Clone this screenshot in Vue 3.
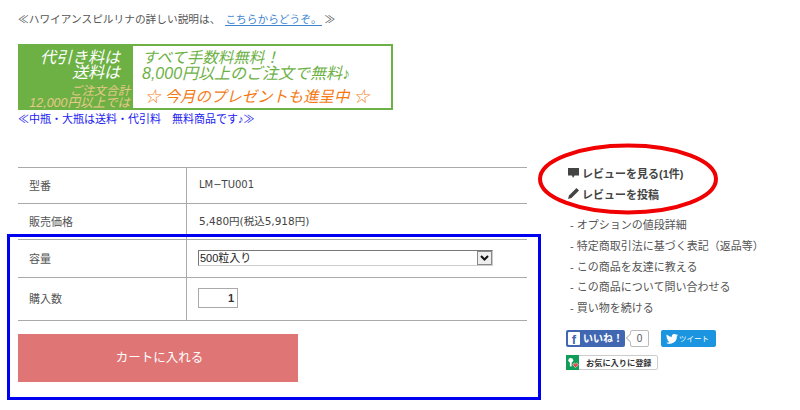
<template>
  <div class="page">
    <main class="left">
      <p class="intro">≪ハワイアンスピルリナの詳しい説明は、 <a class="link">こちらからどうぞ。</a> ≫</p>
      <div class="banner">
        <div class="b-left">
          <div class="b-title">代引き料は<br />送料は</div>
          <div class="b-sub">ご注文合計<br /><span class="b-sub2">12,000円以上では</span></div>
        </div>
        <div class="b-right">
          <div class="b-l1">すべて手数料無料！</div>
          <div class="b-l2">8,000円以上のご注文で無料♪</div>
          <div class="b-l3">☆ 今月のプレゼントも進呈中 ☆</div>
        </div>
      </div>
      <p class="note">≪中瓶・大瓶は送料・代引料　無料商品です♪≫</p>
      <div class="table">
        <div class="row r1"><div class="th">型番</div><div class="td">LM−TU001</div></div>
        <div class="row r2"><div class="th">販売価格</div><div class="td">5,480円(税込5,918円)</div></div>
        <div class="row r3">
          <div class="th">容量</div>
          <div class="td">
            <div class="select">500粒入り<span class="arrow"><svg width="11" height="8" viewBox="0 0 11 8"><path d="M2 2l3.500 3.500L9 2" fill="none" stroke="#111" stroke-width="2" /></svg></span></div>
          </div>
        </div>
        <div class="row r4"><div class="th">購入数</div><div class="td"><div class="qty">1</div></div></div>
      </div>
      <button class="cart">カートに入れる</button>
    </main>
    <aside class="side">
      <div class="review">
        <div class="rv rv1">
          <svg width="13" height="12" viewBox="0 0 13 12"><path d="M1 1h11v7.500H7.500L6 11 5 8.500H1z" fill="#444" /></svg>
          レビューを見る(1件)
        </div>
        <div class="rv rv2">
          <svg width="13" height="13" viewBox="0 0 13 13"><path d="M9.500 1l2.500 2.500-7.500 7.500L1 12l1-3.500z" fill="#444" /></svg>
          レビューを投稿
        </div>
      </div>
      <ul class="links">
        <li v-for="item in links" :key="item">- {{ item }}</li>
      </ul>
      <div class="social">
        <div class="fb"><span class="fb-f">f</span>いいね！</div>
        <div class="count">0</div>
        <div class="tw">
          <svg width="12" height="10" viewBox="0 0 24 20"><path d="M24 2.400a9.800 9.800 0 0 1-2.800.8A4.900 4.900 0 0 0 23.300.5a9.800 9.800 0 0 1-3.100 1.200 4.900 4.900 0 0 0-8.400 4.500A14 14 0 0 1 1.700 1a4.900 4.900 0 0 0 1.500 6.600 4.900 4.900 0 0 1-2.200-.6 4.900 4.900 0 0 0 3.900 4.800 4.900 4.900 0 0 1-2.200.1 4.900 4.900 0 0 0 4.600 3.400A9.900 9.900 0 0 1 0 17.300 14 14 0 0 0 21.600 4.900 10 10 0 0 0 24 2.400z" fill="#fff" /></svg>
          <span>ツイート</span>
        </div>
      </div>
      <div class="fav">
        <span class="fav-icon">
          <svg width="15" height="15" viewBox="0 0 15 15"><circle cx="5.500" cy="5" r="2.800" fill="#fff" /><rect x="4.500" y="6" width="2" height="6" fill="#fff" /><path d="M11 13.500L8 10.500a1.700 1.700 0 0 1 3-1.500 1.700 1.700 0 0 1 3 1.500z" fill="#e8404a" stroke="#fff" stroke-width=".6" /></svg>
        </span>
        <span class="fav-text">お気に入りに登録</span>
      </div>
    </aside>
    <div class="blue-box"></div>
    <svg class="ellipse" width="182" height="74" viewBox="0 0 182 74"><ellipse cx="91" cy="36" rx="88" ry="33.500" fill="none" stroke="#f00000" stroke-width="4" /></svg>
  </div>
</template>

<script setup>
const links = [
  'オプションの値段詳細',
  '特定商取引法に基づく表記（返品等）',
  'この商品を友達に教える',
  'この商品について問い合わせる',
  '買い物を続ける'
]
</script>

<style>
html, body { margin: 0; background: #fff; overflow: hidden; }
</style>

<style scoped>
.page {
  position: relative;
  width: 800px;
  height: 410px;
  overflow: hidden;
  display: flex;
  background: #fff;
  font-family: "Liberation Sans", "Noto Sans CJK JP", sans-serif;
  color: #555;
  font-size: 11px;
}
.left { width: 509px; margin-left: 18px; flex: none; }
.intro { margin: 11px 0 0; height: 16px; line-height: 16px; font-size: 10.700px; white-space: nowrap; }
.link { color: #3d85d0; border-bottom: 1px solid #3d85d0; margin-left: 2px; }
.banner {
  margin-top: 17px;
  width: 375px;
  height: 66px;
  box-sizing: border-box;
  display: flex;
  border: 2px solid #6db145;
  background: #6db145;
  font-style: italic;
}
.b-left { width: 113px; flex: none; text-align: right; color: #fff; }
.b-title { font-size: 16px; line-height: 15px; padding: 4px 13px 0 0; }
.b-sub { color: #e8c98a; font-size: 12px; line-height: 12px; margin-top: 5px; padding-right: 3px; white-space: nowrap; }
.b-sub2 { font-size: 12.500px; }
.b-right { flex: 1; background: #fff; color: #6db145; padding-left: 9px; white-space: nowrap; }
.b-l1 { font-size: 15.500px; line-height: 17px; margin-top: 3px; }
.b-l2 { font-size: 16px; line-height: 16px; }
.b-l3 { font-size: 15.400px; line-height: 17px; color: #f57a14; margin-top: 6px; padding-left: 3px; }
.note { margin: 1px 0 0; height: 16px; line-height: 16px; font-size: 11px; color: #2222f0; white-space: nowrap; }
.table { margin-top: 40px; border-top: 1px solid #aaa; }
.row { display: grid; grid-template-columns: 169px 1fr; border-bottom: 1px solid #aaa; }
.r1 { height: 35px; }
.r2 { height: 35px; }
.r3 { height: 37px; }
.r4 { height: 42px; }
.th { border-right: 1px solid #aaa; padding: 0 0 2px 11px; display: flex; align-items: center; font-size: 11px; }
.td { padding: 0 0 2px 12px; display: flex; align-items: center; font-family: "DejaVu Sans", "Noto Sans CJK JP", sans-serif; font-size: 10px; color: #444; }
.r2 .td { font-size: 10.500px; }
.r3 .td, .r4 .td { padding-left: 11px; }
.select {
  position: relative;
  width: 295px;
  height: 16px;
  box-sizing: border-box;
  border: 1px solid #777;
  border-right-color: #ccc;
  border-bottom-color: #ccc;
  font-family: "Liberation Sans", "Noto Sans CJK JP", sans-serif;
  font-size: 11px;
  line-height: 14px;
  padding-left: 1px;
  color: #222;
}
.arrow {
  position: absolute;
  right: 0;
  top: 0;
  width: 15px;
  height: 14px;
  box-sizing: border-box;
  background: #eee;
  border: 1px solid #888;
  display: flex;
  align-items: center;
  justify-content: center;
}
.qty {
  width: 40px;
  height: 20px;
  box-sizing: border-box;
  border: 1px solid #aaa;
  text-align: right;
  line-height: 18px;
  padding-right: 3px;
  font-family: "Liberation Sans", sans-serif;
  font-size: 11px;
  font-weight: bold;
  color: #333;
}
.cart {
  display: block;
  margin-top: 13px;
  width: 280px;
  height: 48px;
  border: 0;
  padding: 0 0 4px 3px;
  background: #e07575;
  color: #fff;
  font-family: inherit;
  font-size: 12.500px;
}
.side { margin-left: 40px; width: 230px; flex: none; padding-top: 162px; }
.review { height: 44px; }
.rv { display: flex; align-items: center; gap: 2px; height: 21px; font-weight: bold; font-size: 11px; color: #444; white-space: nowrap; }
.links { list-style: none; margin: 9px 0 0; padding: 0 0 0 3px; }
.links li { height: 20.800px; line-height: 21px; font-size: 11px; white-space: nowrap; }
.social { display: flex; align-items: center; margin-top: 11px; margin-left: -1px; height: 18px; }
.fb {
  width: 59px;
  height: 17px;
  box-sizing: border-box;
  background: #4267b2;
  border-radius: 2px;
  color: #fff;
  font-size: 10px;
  font-weight: bold;
  line-height: 17px;
  display: flex;
  align-items: center;
  gap: 3px;
  padding-left: 2px;
  white-space: nowrap;
}
.fb-f { width: 12px; height: 13px; background: #fff; color: #4267b2; font-size: 13px; line-height: 15px; text-align: center; border-radius: 1px; }
.count {
  position: relative;
  margin-left: 5px;
  width: 19px;
  height: 17px;
  box-sizing: border-box;
  border: 1px solid #bbb;
  border-radius: 2px;
  font-size: 10px;
  line-height: 15px;
  text-align: center;
}
.count::before {
  content: "";
  position: absolute;
  left: -4px;
  top: 4px;
  width: 5px;
  height: 5px;
  background: #fff;
  border-left: 1px solid #bbb;
  border-bottom: 1px solid #bbb;
  transform: rotate(45deg);
}
.tw {
  margin-left: 12px;
  width: 55px;
  height: 17px;
  box-sizing: border-box;
  background: #1b95e0;
  border-radius: 2px;
  color: #fff;
  display: flex;
  align-items: center;
  gap: 1px;
  padding-left: 5px;
  font-size: 7.500px;
  white-space: nowrap;
}
.fav {
  margin-top: 7px;
  margin-left: -1px;
  width: 92px;
  height: 15px;
  box-sizing: border-box;
  border: 1px solid #ccc;
  border-radius: 2px;
  display: flex;
  align-items: center;
  position: relative;
}
.fav-icon { width: 13px; height: 15px; background: #0f9d58; display: flex; flex: none; margin-left: -1px; overflow: visible; }
.fav-text { font-size: 8.200px; font-weight: bold; color: #333; margin-left: 7px; white-space: nowrap; }
.blue-box {
  position: absolute;
  left: 7px;
  top: 234px;
  width: 534px;
  height: 166px;
  box-sizing: border-box;
  border: 3px solid #0000f0;
  pointer-events: none;
}
.ellipse { position: absolute; left: 537px; top: 143px; }
</style>
